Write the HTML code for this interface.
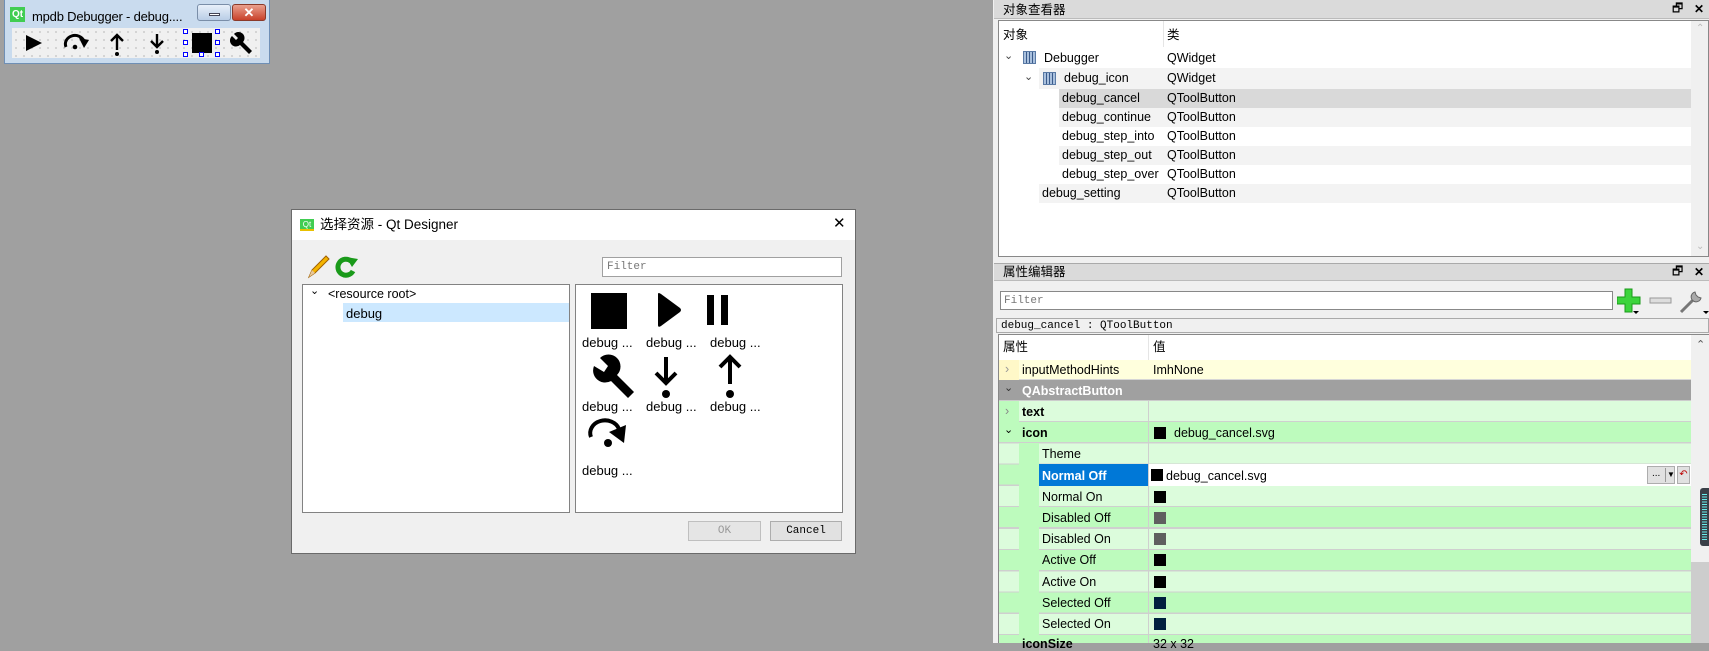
<!DOCTYPE html>
<html><head><meta charset="utf-8"><style>
*{margin:0;padding:0;box-sizing:border-box}
body{width:1709px;height:643px;background:#a0a0a0;position:relative;overflow:hidden;font-family:"Liberation Sans","Noto Sans CJK SC",sans-serif;font-size:12.5px;color:#000}
.a{position:absolute}
.t{position:absolute;white-space:nowrap;line-height:1}
.mono{font-family:"Liberation Mono",monospace;font-size:11px}
</style></head><body>

<!-- mini window -->
<div class="a" style="left:4px;top:0;width:266px;height:64px;background:#c9dbee;border:1px solid #6f8fb5;border-top:none"></div>
<div class="a" style="left:10px;top:7px;width:15px;height:15px;background:#41cd52;color:#fff;font-size:10px;font-weight:bold;text-align:center;line-height:15px">Qt</div>
<div class="t" style="left:32px;top:10px;font-size:13px;letter-spacing:-0.2px">mpdb Debugger - debug....</div>
<div class="a" style="left:197px;top:4px;width:34px;height:17px;border:1px solid #7a8ea8;border-radius:3px;background:linear-gradient(#e8f0fa,#b9cde6)"><div class="a" style="left:11px;top:8px;width:11px;height:3px;background:#fff;border:1px solid #445"></div></div>
<div class="a" style="left:232px;top:4px;width:34px;height:17px;border:1px solid #8a3a2a;border-radius:3px;background:linear-gradient(#eaa08e,#c8412a);color:#fff;font-weight:bold;text-align:center;font-size:13px;line-height:15px">✕</div>
<div class="a" style="left:12px;top:28px;width:248px;height:30px;background:#f0f0f0;background-image:radial-gradient(#888 0.6px,transparent 0.8px);background-size:8px 8px"></div>
<svg class="a" style="left:12px;top:28px" width="248" height="30">
<path d="M14 7 L30 15 L14 23Z" fill="#000"/>
<path d="M54 19 A9 8 0 0 1 72 13" fill="none" stroke="#000" stroke-width="3"/><path d="M67 10 L77 12 L72 20Z" fill="#000"/><circle cx="63" cy="19" r="2.3"/>
<path d="M105 22 V8 M99 13 L105 7 L111 13" fill="none" stroke="#000" stroke-width="2.4"/><circle cx="105" cy="26" r="2"/>
<path d="M145 6 V18 M139 13 L145 19 L151 13" fill="none" stroke="#000" stroke-width="2.4"/><circle cx="145" cy="24" r="2"/>
<rect x="180" y="5" width="20" height="20" fill="#000"/>
<g fill="#fff" stroke="#00f" stroke-width="1"><rect x="171.5" y="1.5" width="4" height="4"/><rect x="171.5" y="12.5" width="4" height="4"/><rect x="171.5" y="24.5" width="4" height="4"/><rect x="203.5" y="12.5" width="4" height="4"/><rect x="203.5" y="1.5" width="4" height="4"/><rect x="187.5" y="24.5" width="4" height="4"/><rect x="203.5" y="24.5" width="4" height="4"/></g>
<path d="M220 8 a6 6 0 0 0 8 9 l9 9 l3 -3 l-9 -9 a6 6 0 0 0 -9 -8 l4 4 l-2 2z" fill="#000"/>
</svg>

<!-- dialog -->
<div class="a" style="left:291px;top:209px;width:565px;height:345px;background:#f0f0f0;border:1px solid #6a6a6a"></div>
<div class="a" style="left:292px;top:210px;width:563px;height:30px;background:#fff"></div>
<div class="a" style="left:300px;top:219px;width:14px;height:12px;background:#41cd52;color:#fff;font-size:8px;text-align:center;line-height:12px;border-bottom:2px solid #e8c000">Qt</div>
<div class="t" style="left:320px;top:218px;font-size:13.5px">选择资源 - Qt Designer</div>
<div class="t" style="left:833px;top:216px;font-size:15px;font-weight:normal">✕</div>
<svg class="a" style="left:306px;top:255px" width="55" height="24">
<path d="M3 22 L6 15 L20 1 L23 4 L9 18Z" fill="#f4b400" stroke="#a06000" stroke-width="1"/><path d="M3 22 L6 15 L9 18Z" fill="#e8c89a"/>
<path d="M45 6 A8 8 0 1 0 47 16" fill="none" stroke="#1a9a1a" stroke-width="5"/><path d="M40 2 L52 4 L46 12Z" fill="#1a9a1a"/>
</svg>
<div class="a" style="left:602px;top:257px;width:240px;height:20px;background:#fff;border:1px solid #a0a0a0"></div>
<div class="t mono" style="left:607px;top:262px;color:#777">Filter</div>
<div class="a" style="left:302px;top:284px;width:268px;height:229px;background:#fff;border:1px solid #828282"></div>
<div class="t" style="left:310px;top:286px;font-size:11px">⌄</div>
<div class="t" style="left:328px;top:288px">&lt;resource root&gt;</div>
<div class="a" style="left:343px;top:303px;width:226px;height:19px;background:#cce8ff"></div>
<div class="t" style="left:346px;top:307px;font-size:13px">debug</div>
<div class="a" style="left:575px;top:284px;width:268px;height:229px;background:#fff;border:1px solid #828282"></div>
<svg class="a" style="left:576px;top:285px" width="200" height="180">
<rect x="15" y="8" width="36" height="36"/>
<path d="M82 9 L82 40 Q82 43 85 41 L104 27 Q106 25 104 23 L85 9 Q82 7 82 9Z"/>
<rect x="131" y="10" width="7" height="30"/><rect x="145" y="10" width="7" height="30"/>
<path d="M18 81 a12 12 0 0 0 17 15 l17 17 l6 -6 l-17 -17 a12 12 0 0 0 -17 -17 l8 8 l-4 6z"/>
<path d="M90 72 V96 M80 88 L90 98 L100 88" fill="none" stroke="#000" stroke-width="4"/><circle cx="90" cy="109" r="4"/>
<path d="M154 72 V99 M144 82 L154 72 L164 82" fill="none" stroke="#000" stroke-width="4"/><circle cx="154" cy="109" r="4"/>
<path d="M15 152 A14 12 0 0 1 43 144" fill="none" stroke="#000" stroke-width="4"/><path d="M33 147 L50 140 L48 158Z"/><circle cx="32" cy="158" r="4"/>
</svg>
<div class="t" style="left:582px;top:336px;font-size:13px">debug ...</div>
<div class="t" style="left:646px;top:336px;font-size:13px">debug ...</div>
<div class="t" style="left:710px;top:336px;font-size:13px">debug ...</div>
<div class="t" style="left:582px;top:400px;font-size:13px">debug ...</div>
<div class="t" style="left:646px;top:400px;font-size:13px">debug ...</div>
<div class="t" style="left:710px;top:400px;font-size:13px">debug ...</div>
<div class="t" style="left:582px;top:464px;font-size:13px">debug ...</div>
<div class="a mono" style="left:688px;top:521px;width:73px;height:20px;border:1px solid #bfbfbf;background:#e5e5e5;color:#999;text-align:center;line-height:18px">OK</div>
<div class="a mono" style="left:770px;top:521px;width:72px;height:20px;border:1px solid #adadad;background:#e1e1e1;text-align:center;line-height:18px">Cancel</div>

<!-- object inspector -->
<div class="a" style="left:993px;top:0;width:716px;height:643px;background:#f0f0f0"></div>
<div class="a" style="left:994px;top:0;width:715px;height:19px;background:#dadada;border-bottom:1px solid #bbb"></div>
<div class="t" style="left:1003px;top:4px">对象查看器</div>
<div class="t" style="left:1672px;top:2px;font-size:12px">🗗</div>
<div class="t" style="left:1694px;top:3px;font-size:12px;font-weight:bold">✕</div>
<div class="a" style="left:998px;top:20px;width:711px;height:237px;background:#fff;border:1px solid #888"></div>
<div class="a" style="left:1163px;top:21px;width:1px;height:26px;background:#e5e5e5"></div>
<div class="t" style="left:1003px;top:29px">对象</div>
<div class="t" style="left:1167px;top:29px">类</div>
<div class="a" style="left:1039px;top:68px;width:653px;height:21px;background:#f3f3f3"></div>
<div class="a" style="left:1059px;top:89px;width:633px;height:19px;background:#d9d9d9"></div>
<div class="a" style="left:1059px;top:108px;width:633px;height:19px;background:#f3f3f3"></div>
<div class="a" style="left:1059px;top:146px;width:633px;height:19px;background:#f3f3f3"></div>
<div class="a" style="left:1039px;top:184px;width:653px;height:19px;background:#f3f3f3"></div>
<div class="a" style="left:1691px;top:21px;width:17px;height:235px;background:#f0f0f0"></div>
<div class="t" style="left:1004px;top:51px;font-size:11px;color:#444">⌄</div>
<div class="t" style="left:1024px;top:72px;font-size:11px;color:#444">⌄</div>
<div class="a" style="left:1023px;top:51px;width:13px;height:13px;border:1px solid #5a7aa5;background:repeating-linear-gradient(90deg,#a9c0dd 0 2px,#3a5a8a 2px 3px)"></div>
<div class="a" style="left:1043px;top:72px;width:13px;height:13px;border:1px solid #5a7aa5;background:repeating-linear-gradient(90deg,#a9c0dd 0 2px,#3a5a8a 2px 3px)"></div>
<div class="t" style="left:1044px;top:52px">Debugger</div><div class="t" style="left:1167px;top:52px">QWidget</div>
<div class="t" style="left:1064px;top:72px">debug_icon</div><div class="t" style="left:1167px;top:72px">QWidget</div>
<div class="t" style="left:1062px;top:92px">debug_cancel</div><div class="t" style="left:1167px;top:92px">QToolButton</div>
<div class="t" style="left:1062px;top:111px">debug_continue</div><div class="t" style="left:1167px;top:111px">QToolButton</div>
<div class="t" style="left:1062px;top:130px">debug_step_into</div><div class="t" style="left:1167px;top:130px">QToolButton</div>
<div class="t" style="left:1062px;top:149px">debug_step_out</div><div class="t" style="left:1167px;top:149px">QToolButton</div>
<div class="t" style="left:1062px;top:168px">debug_step_over</div><div class="t" style="left:1167px;top:168px">QToolButton</div>
<div class="t" style="left:1042px;top:187px">debug_setting</div><div class="t" style="left:1167px;top:187px">QToolButton</div>
<div class="t" style="left:1696px;top:24px;font-size:10px;color:#bbb">⌃</div>
<div class="t" style="left:1696px;top:242px;font-size:10px;color:#bbb">⌄</div>

<!-- property editor -->
<div class="a" style="left:994px;top:263px;width:715px;height:18px;background:#dadada;border-top:1px solid #aaa;border-bottom:1px solid #bbb"></div>
<div class="t" style="left:1003px;top:266px">属性编辑器</div>
<div class="t" style="left:1672px;top:265px;font-size:12px">🗗</div>
<div class="t" style="left:1694px;top:266px;font-size:12px;font-weight:bold">✕</div>
<div class="a" style="left:1000px;top:291px;width:613px;height:19px;background:#fff;border:1px solid #888"></div>
<div class="t mono" style="left:1004px;top:296px;color:#777">Filter</div>
<svg class="a" style="left:1617px;top:287px" width="92" height="28">
<path d="M8 2 h7 v8 h8 v7 h-8 v8 h-7 v-8 h-8 v-7 h8z" fill="#3cd43c" stroke="#1a9a1a"/>
<path d="M19 27 l3 -3 h-6z" fill="#000"/>
<rect x="33" y="11" width="21" height="5" fill="#ddd" stroke="#999"/>
<path d="M64 25 L80 9" stroke="#777" stroke-width="3"/><path d="M78 5 a5 5 0 1 0 6 6 l-3 -1 l-2 -2z" fill="#aaa" stroke="#666"/>
<path d="M89 27 l3 -3 h-6z" fill="#000"/>
</svg>
<div class="a" style="left:996px;top:318px;width:713px;height:15px;background:#f0f0f0;border:1px solid #aaa"></div>
<div class="t mono" style="left:1001px;top:321px;color:#000">debug_cancel : QToolButton</div>
<div class="a" style="left:998px;top:334px;width:711px;height:309px;background:#fff;border:1px solid #888"></div>
<div class="a" style="left:1148px;top:335px;width:1px;height:25px;background:#e5e5e5"></div>
<div class="t" style="left:1003px;top:341px">属性</div>
<div class="t" style="left:1153px;top:341px">值</div>
<div class="a" style="left:999px;top:360px;width:692px;height:20px;background:#ffffdd;border-bottom:1px solid #d6d6d6"></div>
<div class="a" style="left:999px;top:360px;width:20px;height:20px;background:#fff8c8"></div>
<div class="t" style="left:1005px;top:363px;color:#999">›</div>
<div class="t" style="left:1022px;top:364px">inputMethodHints</div>
<div class="t" style="left:1153px;top:364px">ImhNone</div>
<div class="a" style="left:999px;top:380px;width:692px;height:21px;background:#a0a0a0;border-bottom:1px solid #ccc"></div>
<div class="t" style="left:1004px;top:383px;color:#333;font-size:11px">⌄</div>
<div class="t" style="left:1022px;top:385px;color:#fff;font-weight:bold">QAbstractButton</div>

<div class="a" style="left:999px;top:401px;width:692px;height:242px;background:repeating-linear-gradient(#dcfcdc 0 20px,#cfcfcf 20px 21px,#bdfbbd 21px 41px,#cfcfcf 41px 42.6px)"></div>
<div class="a" style="left:1148px;top:401px;width:1px;height:242px;background:#cfcfcf"></div>
<div class="a" style="left:999px;top:401px;width:20px;height:21px;background:#bdfbbd"></div>
<div class="a" style="left:1019px;top:443px;width:20px;height:200px;background:#bdfbbd"></div>
<div class="t" style="left:1005px;top:405px;color:#888">›</div>
<div class="t" style="left:1022px;top:406px;font-weight:bold">text</div>
<div class="t" style="left:1004px;top:425px;font-size:11px">⌄</div>
<div class="t" style="left:1022px;top:427px;font-weight:bold">icon</div>
<div class="a" style="left:1154px;top:427px;width:12px;height:12px;background:#000"></div>
<div class="t" style="left:1174px;top:427px">debug_cancel.svg</div>
<div class="t" style="left:1042px;top:448px">Theme</div>
<div class="a" style="left:1039px;top:464px;width:109px;height:22px;background:#0078d7"></div>
<div class="t" style="left:1042px;top:470px;color:#fff;font-weight:bold">Normal Off</div>
<div class="a" style="left:1149px;top:464px;width:542px;height:22px;background:#fff"></div>
<div class="a" style="left:1151px;top:469px;width:12px;height:12px;background:#000"></div>
<div class="t" style="left:1166px;top:470px">debug_cancel.svg</div>
<div class="a" style="left:1647px;top:466px;width:28px;height:18px;background:#e1e1e1;border:1px solid #adadad;font-size:10px;line-height:14px;padding-left:4px">...</div>
<div class="a" style="left:1665px;top:468px;width:1px;height:14px;background:#999"></div>
<div class="t" style="left:1667px;top:471px;font-size:8px">▼</div>
<div class="a" style="left:1677px;top:466px;width:13px;height:18px;background:#e1e1e1;border:1px solid #adadad;color:#b00;font-size:10px;text-align:center;line-height:15px">↶</div>
<div class="t" style="left:1042px;top:491px">Normal On</div><div class="a" style="left:1154px;top:491px;width:12px;height:12px;background:#000"></div>
<div class="t" style="left:1042px;top:512px">Disabled Off</div><div class="a" style="left:1154px;top:512px;width:12px;height:12px;background:#5f5f5f"></div>
<div class="t" style="left:1042px;top:533px">Disabled On</div><div class="a" style="left:1154px;top:533px;width:12px;height:12px;background:#5f5f5f"></div>
<div class="t" style="left:1042px;top:554px">Active Off</div><div class="a" style="left:1154px;top:554px;width:12px;height:12px;background:#000"></div>
<div class="t" style="left:1042px;top:576px">Active On</div><div class="a" style="left:1154px;top:576px;width:12px;height:12px;background:#000"></div>
<div class="t" style="left:1042px;top:597px">Selected Off</div><div class="a" style="left:1154px;top:597px;width:12px;height:12px;background:#00213e"></div>
<div class="t" style="left:1042px;top:618px">Selected On</div><div class="a" style="left:1154px;top:618px;width:12px;height:12px;background:#00213e"></div>
<div class="t" style="left:1022px;top:638px;font-weight:bold">iconSize</div><div class="t" style="left:1153px;top:638px">32 x 32</div>

<div class="a" style="left:1691px;top:335px;width:18px;height:308px;background:#f0f0f0"></div>
<div class="t" style="left:1696px;top:340px;font-size:11px;color:#555">⌃</div>
<div class="a" style="left:1691px;top:562px;width:18px;height:81px;background:#cdcdcd"></div>
<div class="a" style="left:1700px;top:488px;width:9px;height:58px;background:#3a4048;border-radius:3px 0 0 3px"></div>
<div class="a" style="left:1702px;top:494px;width:5px;height:46px;background:repeating-linear-gradient(#6ee 0 1px,transparent 1px 2.5px)"></div>
</body></html>
